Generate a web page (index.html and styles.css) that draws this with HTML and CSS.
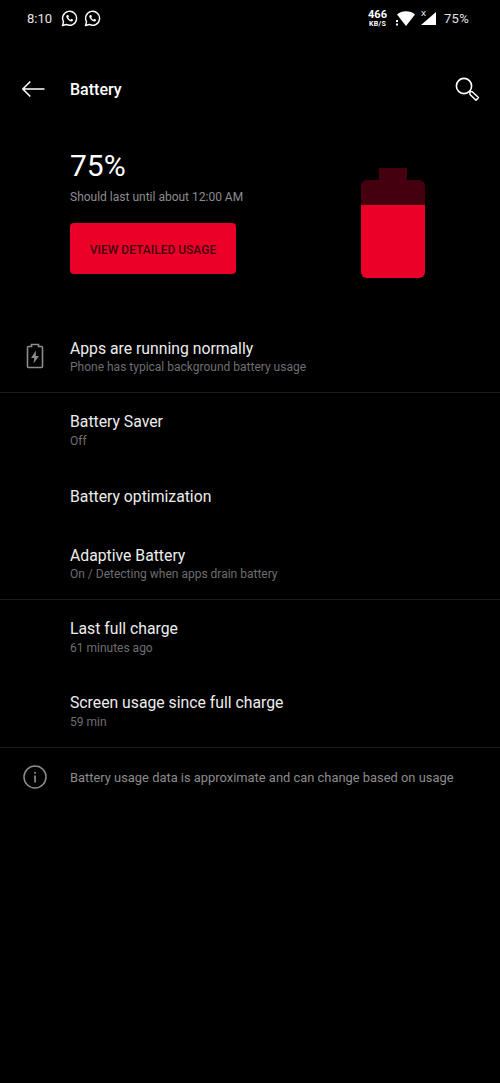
FILE: index.html
```html
<!DOCTYPE html>
<html lang="en">
    <head>
        <meta charset="UTF-8">
        <meta name="viewport" content="width=device-width, initial-scale=1.0">
        <title>Battery</title>
        <link rel="stylesheet" href="styles.css">
    </head>
    <body>
        <div class="status-bar">
            <span class="clock">8:10</span>
            <svg class="wa-icon" viewBox="0 0 18 18">
                <path d="M1.600 16.400l1.100-3.900A7.400 7.400 0 1 1 5.600 15.300z" fill="none" stroke="#fff" stroke-width="1.500" stroke-linejoin="round"/>
                <path d="M6.600 5.200c-.9.5-1.200 1.600-.7 2.800.8 1.900 2.300 3.300 4.200 4 1.200.4 2.200 0 2.600-1l.1-.8-1.800-.9-.8 1c-1.100-.4-2-1.300-2.500-2.400l.7-.9-.8-1.800z" fill="#fff"/>
            </svg>
            <svg class="wa-icon" viewBox="0 0 18 18">
                <path d="M1.600 16.400l1.100-3.900A7.400 7.400 0 1 1 5.600 15.300z" fill="none" stroke="#fff" stroke-width="1.500" stroke-linejoin="round"/>
                <path d="M6.600 5.200c-.9.5-1.200 1.600-.7 2.800.8 1.900 2.300 3.300 4.200 4 1.200.4 2.200 0 2.600-1l.1-.8-1.800-.9-.8 1c-1.100-.4-2-1.300-2.500-2.400l.7-.9-.8-1.800z" fill="#fff"/>
            </svg>
            <div class="status-right">
                <div class="speed">
                    <span class="speed-num">466</span>
                    <span class="speed-unit">KB/S</span>
                </div>
                <svg class="wifi-icon" viewBox="0 0 20 15">
                    <path d="M1 3.500C3.500 1.300 6.500.2 10 .2s6.500 1.100 9 3.300L10 15z" fill="#fff"/>
                    <rect x="0" y="9" width="2" height="2" fill="#fff"/>
                    <rect x="0" y="12.500" width="2" height="2" fill="#fff"/>
                </svg>
                <div class="signal">
                    <span class="signal-x">X</span>
                    <svg class="signal-icon" viewBox="0 0 15 13">
                        <path d="M15 0V13H0z" fill="#fff"/>
                    </svg>
                </div>
                <span class="status-pct">75%</span>
            </div>
        </div>

        <div class="app-bar">
            <svg class="back-icon" viewBox="0 0 24 18">
                <path d="M22.500 9H.8M8.300 1.500L.8 9l7.500 7.500" fill="none" stroke="#fff" stroke-width="1.600"/>
            </svg>
            <h1 class="app-title">Battery</h1>
            <svg class="search-icon" viewBox="0 0 26 26">
                <circle cx="10" cy="10" r="7.600" fill="none" stroke="#fff" stroke-width="1.600"/>
                <path d="M15.800 15.300L18.300 15.800L24.500 21.500L22 24.300L16 18.500z" fill="#000" stroke="#fff" stroke-width="1.500" stroke-linejoin="round"/>
            </svg>
        </div>

        <div class="hero">
            <div class="hero-text">
                <div class="level">75%</div>
                <div class="estimate">Should last until about 12:00 AM</div>
                <div class="usage-button">VIEW DETAILED USAGE</div>
            </div>
            <svg class="battery-big" viewBox="0 0 64 110">
                <path d="M18 0H46V12H58a6 6 0 0 1 6 6V38H0V18a6 6 0 0 1 6-6H18z" fill="#45000f"/>
                <path d="M0 37H64V104a6 6 0 0 1-6 6H6a6 6 0 0 1-6-6z" fill="#eb0028"/>
            </svg>
        </div>

        <div class="row row-status">
            <svg class="row-icon" viewBox="0 0 24 28">
                <path d="M8.500 4.500V2.500H15.500V4.500H18.500a1 1 0 0 1 1 1V24.500a1 1 0 0 1-1 1H5.500a1 1 0 0 1-1-1V5.500a1 1 0 0 1 1-1z" fill="none" stroke="#8c8c8c" stroke-width="1.600"/>
                <path d="M13 8.500L8 16h3.200L10.500 21.500 16 14h-3.300z" fill="#8c8c8c"/>
            </svg>
            <div class="row-text">
                <div class="row-title">Apps are running normally</div>
                <div class="row-sub">Phone has typical background battery usage</div>
            </div>
        </div>
        <div class="divider"></div>

        <div class="row">
            <div class="row-text">
                <div class="row-title">Battery Saver</div>
                <div class="row-sub">Off</div>
            </div>
        </div>
        <div class="row row-single">
            <div class="row-text">
                <div class="row-title">Battery optimization</div>
            </div>
        </div>
        <div class="row row-end">
            <div class="row-text">
                <div class="row-title">Adaptive Battery</div>
                <div class="row-sub">On / Detecting when apps drain battery</div>
            </div>
        </div>
        <div class="divider"></div>

        <div class="row">
            <div class="row-text">
                <div class="row-title">Last full charge</div>
                <div class="row-sub">61 minutes ago</div>
            </div>
        </div>
        <div class="row row-last">
            <div class="row-text">
                <div class="row-title">Screen usage since full charge</div>
                <div class="row-sub">59 min</div>
            </div>
        </div>
        <div class="divider"></div>

        <div class="row row-info">
            <svg class="row-icon" viewBox="0 0 24 24">
                <circle cx="12" cy="12" r="11" fill="none" stroke="#8c8c8c" stroke-width="1.500"/>
                <rect x="11.200" y="10.500" width="1.700" height="7" fill="#8c8c8c"/>
                <rect x="11.200" y="6.800" width="1.700" height="1.900" fill="#8c8c8c"/>
            </svg>
            <div class="info-text">Battery usage data is approximate and can change based on usage</div>
        </div>
    </body>
</html>
```

FILE: styles.css
```css
html {
    background-color: #000;
}
body {
    margin: 0;
    height: 1083px;
    overflow: hidden;
    background-color: #000;
    color: #fff;
    font-family: Roboto, sans-serif;
}
.status-bar {
    display: flex;
    align-items: center;
    height: 37px;
    padding: 0 31px 0 27px;
    box-sizing: border-box;
}
.clock {
    font-size: 13px;
    color: #e6e6e6;
    margin-right: 9px;
}
.wa-icon {
    width: 17px;
    height: 17px;
    margin-right: 6px;
}
.status-right {
    display: flex;
    align-items: center;
    margin-left: auto;
}
.speed {
    display: flex;
    flex-direction: column;
    align-items: center;
    font-weight: 700;
    margin-right: 9px;
}
.speed-num {
    font-size: 11px;
    line-height: 10px;
}
.speed-unit {
    font-size: 7px;
    line-height: 8px;
    letter-spacing: 0.3px;
}
.wifi-icon {
    width: 20px;
    height: 15px;
    margin-right: 5px;
}
.signal {
    position: relative;
    width: 15px;
    height: 13px;
    margin-right: 8px;
}
.signal-x {
    position: absolute;
    left: 0;
    top: -2px;
    font-size: 8px;
    line-height: 8px;
}
.signal-icon {
    display: block;
    width: 15px;
    height: 13px;
}
.status-pct {
    font-size: 13px;
    letter-spacing: 0.3px;
    color: #e0e0e0;
}
.app-bar {
    display: flex;
    align-items: center;
    height: 104px;
    padding: 0 20px 0 22px;
    box-sizing: border-box;
}
.back-icon {
    width: 24px;
    height: 18px;
    margin-right: 24px;
}
.app-title {
    margin: 0;
    font-size: 16px;
    font-weight: 500;
}
.search-icon {
    width: 26px;
    height: 26px;
    margin-left: auto;
}
.hero {
    display: flex;
    justify-content: space-between;
    align-items: flex-start;
    height: 184px;
    padding: 0 75px 0 70px;
}
.level {
    margin-top: 7px;
    font-size: 30px;
    line-height: 36px;
}
.estimate {
    margin-top: 4px;
    font-size: 12px;
    line-height: 18px;
    color: #8c8c8c;
}
.usage-button {
    display: flex;
    align-items: center;
    justify-content: center;
    width: 166px;
    height: 51px;
    margin-top: 17px;
    padding-top: 2px;
    box-sizing: border-box;
    background-color: #eb0028;
    border-radius: 4px;
    color: #45000f;
    font-size: 12px;
    font-weight: 500;
}
.battery-big {
    width: 64px;
    height: 110px;
    margin-top: 27px;
}
.row {
    display: flex;
    align-items: flex-start;
    height: 74px;
    box-sizing: border-box;
    padding: 19px 20px 0 70px;
}
.row-status {
    position: relative;
    height: 67px;
    padding-top: 14px;
}
.row-single {
    height: 60px;
    padding-top: 20px;
}
.row-end {
    height: 72px;
}
.row-last {
    height: 73px;
}
.row-text {
    min-width: 0;
}
.row-title {
    font-size: 15.750px;
    line-height: 20px;
    color: #ededed;
}
.row-sub {
    font-size: 12px;
    line-height: 18px;
    color: #6e6e6e;
}
.row-status .row-sub,
.row-end .row-sub {
    margin-top: -1px;
}
.row-status .row-icon {
    position: absolute;
    left: 23px;
    top: 17px;
    width: 24px;
    height: 28px;
}
.divider {
    height: 1px;
    background-color: #1c1c1c;
}
.row-info {
    align-items: center;
    height: 58px;
    padding: 0 20px 0 23px;
}
.row-info .row-icon {
    width: 24px;
    height: 24px;
    margin-right: 23px;
}
.info-text {
    font-size: 12.900px;
    color: #8c8c8c;
}
```
